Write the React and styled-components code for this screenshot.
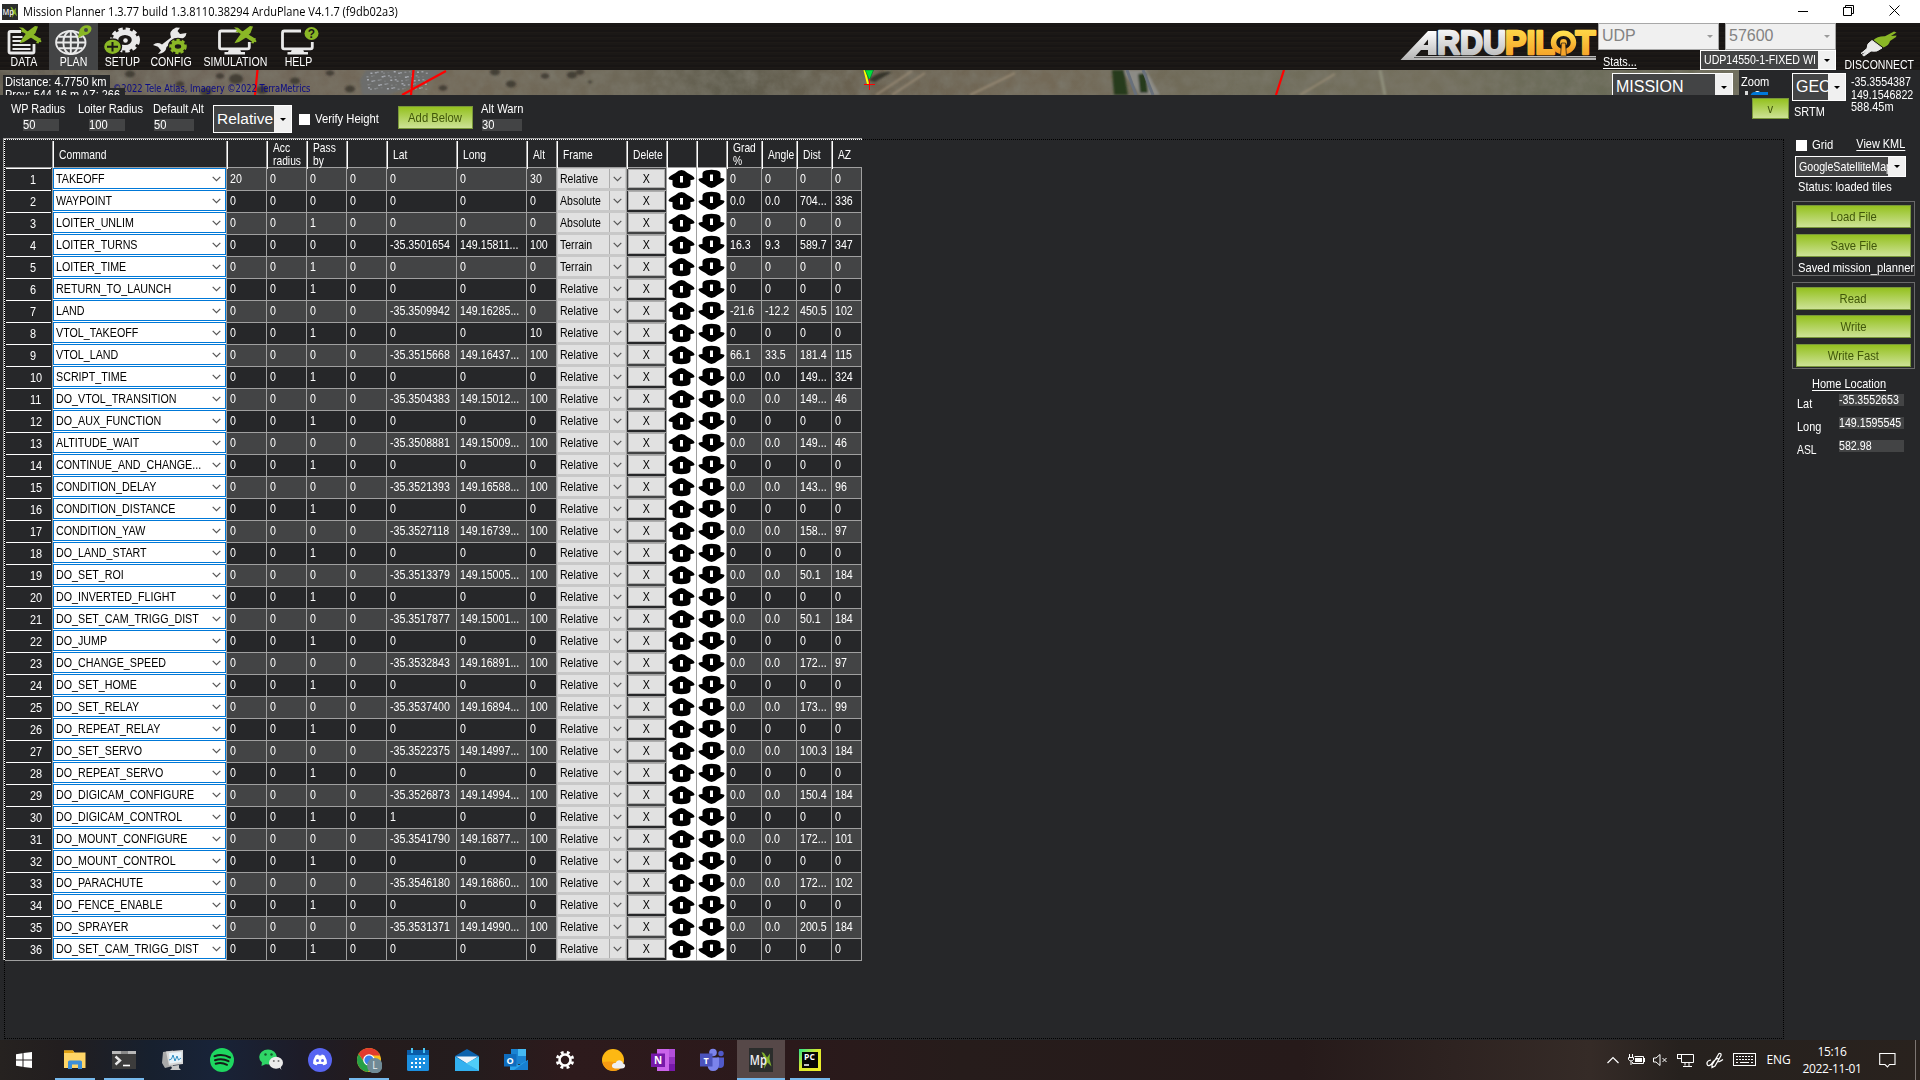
import React from "react";
import styled, { createGlobalStyle, css } from "styled-components";

const sans = '"Liberation Sans", Arial, sans-serif';
const segoe = '"Open Sans", "Noto Sans", sans-serif';

const Global = createGlobalStyle`
  * { box-sizing: border-box; }
  html, body { margin: 0; padding: 0; background: #262729; }
  body { width: 1920px; height: 1080px; overflow: hidden; font-family: ${sans}; font-size: 13px; color: #fff; }
  svg { display: block; flex: none; }
`;

/* condensed run of text */
const T = styled.span`
  display: inline-block; transform: scaleX(${(p) => p.$s || 0.84}); transform-origin: ${(p) => p.$o || "left"} center; white-space: inherit;
`;

const Desktop = styled.div`
  width: 1920px; height: 1080px; display: flex; flex-direction: column; overflow: hidden; white-space: nowrap;
`;

/* ---------- title bar ---------- */
const TitleBar = styled.div`
  height: 23px; background: #fff; color: #000; display: flex; align-items: center; padding-left: 2px; flex: none;
`;
const Title = styled.div`
  font: 12px/22px ${segoe}; margin-left: 5px; flex: 1;
`;
const WindowButtons = styled.div`
  display: flex; align-items: center; gap: 35px; padding: 0 20px 3px 0;
`;

/* ---------- menu strip ---------- */
const MenuStrip = styled.div`
  height: 47px; flex: none; display: flex; overflow: hidden;
  background: repeating-linear-gradient(0deg, #1b1816 0 2px, #1e1a17 2px 3px, #181514 3px 5px);
`;
const MenuItem = styled.div`
  width: ${(p) => p.$w}px; flex: none; display: flex; flex-direction: column; align-items: center; padding: 2px 1px 0 0;
  background: ${(p) => (p.$on ? "#434445" : "transparent")};
`;
const MenuLabel = styled.div`
  font-size: 13.4px; line-height: 14px; color: #fff; margin-top: -1px;
`;
const Spacer = styled.div`flex: 1;`;
const LogoBox = styled.div`padding-top: 5px; margin-right: 1px; flex: none;`;
const Connection = styled.div`width: 238px; display: flex; flex-direction: column; flex: none;`;
const ConnRow = styled.div`display: flex; justify-content: space-between;`;
const Link = styled(T)`text-decoration: underline; text-underline-offset: 2px;`;
const StatsLink = styled.div`padding: 4px 0 0 5px; font-size: 13.4px;`;
const Disconnect = styled.div`
  width: 84px; flex: none; display: flex; flex-direction: column; align-items: center; padding: 8px 0 0 2px;
`;

/* ---------- combo boxes ---------- */
const Combo = styled.div`
  display: flex; flex: none; width: ${(p) => p.$w}px; height: ${(p) => p.$h}px; overflow: hidden;
  border: 1px solid ${(p) => (p.$off ? "#a8a8a8" : "#fff")};
  background: ${(p) => (p.$off ? "#f0f0f0" : "#434445")};
  color: ${(p) => (p.$off ? "#838383" : "#fff")};
`;
const ComboText = styled.div`
  flex: 1; min-width: 0; overflow: hidden; padding-left: 3px; line-height: ${(p) => p.$lh}px;
  ${(p) => (p.$big ? css`font: ${p.$big}px/${p.$lh}px ${sans};` : "")}
`;
const ComboArrow = styled.div`
  width: 17px; flex: none; background: #f0f0f0; display: flex; align-items: center; justify-content: center;
  &::after { content: ""; border: 3px solid transparent; border-top-color: ${(p) => (p.$off ? "#9a9a9a" : "#000")}; border-bottom: 0; }
`;
const ComboBox = ({ w, h, off, big, lh, s, children }) => (
  <Combo $w={w} $h={h} $off={off}>
    <ComboText $big={big} $lh={lh}><T $s={s || 1}>{children}</T></ComboText>
    <ComboArrow $off={off} />
  </Combo>
);

/* ---------- work area ---------- */
const Work = styled.div`flex: 1; min-height: 0; display: flex; background: #262729;`;
const MainCol = styled.div`width: 1789px; display: flex; flex-direction: column; flex: none;`;
const MapRow = styled.div`height: 25px; display: flex; overflow: hidden; flex: none;`;
const MapView = styled.div`width: 1739px; height: 25px; position: relative; overflow: hidden; flex: none;`;
const MapOverlay = styled.div`position: absolute; left: 3px; top: 5px; display: flex; flex-direction: column; align-items: flex-start;`;
const MapTag = styled.div`
  background: #262729; width: ${(p) => p.$w}px; height: 13px; line-height: 14px; padding-left: 2px; font-size: 13.2px; overflow: hidden;
`;
const Copyright = styled.div`
  position: absolute; left: 113px; top: 12px; font: 9.6px/14px "DejaVu Sans", sans-serif; color: #0a0a84;
`;
const MissionPick = styled.div`position: absolute; left: 1612px; top: 3px;`;
const ZoomPanel = styled.div`width: 50px; padding: 5px 0 0 2px; line-height: 14px; font-size: 13.2px;`;

const ParamBar = styled.div`height: 44px; flex: none; display: flex; align-items: flex-start;`;
const Param = styled.div`
  display: flex; flex: none; flex-direction: column; width: ${(p) => p.$w}px; margin-left: ${(p) => p.$ml}px; padding-top: 7px; line-height: 14px; font-size: 13.3px;
`;
const ParamInput = styled.div`
  background: #434445; width: ${(p) => p.$w}px; height: 12px; line-height: 12px; margin: 3px 0 0 ${(p) => p.$ml || 0}px;
`;
const Check = styled.div`
  display: flex; align-items: center; gap: 5px; line-height: 14px; font-size: 13.4px;
  &::before { content: ""; width: 11px; height: 11px; background: #fff; }
`;
const VerifyCheck = styled(Check)`margin: 17px 0 0 7px; width: 99px; flex: none;`;
const GreenBox = styled.div`
  flex: none; width: ${(p) => p.$w}px; height: ${(p) => p.$h || 23}px; line-height: ${(p) => (p.$h || 23) - 1}px;
  border: 1px solid #79973a; background: linear-gradient(#94c11f, #cde296); color: #40570a; text-align: center;
  font-size: 13.4px; margin: ${(p) => p.$m || 0};
`;
const GreenButton = ({ w, h, m, children }) => <GreenBox $w={w} $h={h} $m={m}><T $s={0.84} $o="center">{children}</T></GreenBox>;
const SelectWrap = styled.div`margin: 10px 0 0 10px;`;

/* ---------- waypoint grid ---------- */
const GridFrame = styled.div`
  margin-left: 4px; width: 1780px; height: 900px; border: 1px dotted #000; flex: none;
`;
const GridOuter = styled.div`
  width: 859px; margin: -2px 0 0 -2px; border-left: 1px solid #a0a0a0; border-top: 1px solid #a0a0a0;
`;
const GridInner = styled.div`border-left: 1px dotted #fff; border-top: 1px dotted #fff;`;
const cols = "48px 174px 40px 40px 40px 40px 70px 70px 30px 70px 40px 30px 30px 35px 35px 35px 30px";
const HeadRow = styled.div`
  display: grid; grid-template-columns: ${cols}; height: 28px; border-bottom: 1px solid #a0a0a0;
`;
const HeadCell = styled.div`
  display: flex; align-items: center; line-height: 13px; white-space: pre; margin: 1px 0 1px 0;
  padding: 0 0 2px 5px; border-left: ${(p) => (p.$first ? "0" : "1px solid #fff")};
  border-right: ${(p) => (p.$last ? "0" : "1px solid #a0a0a0")};
`;
const Row = styled.div`
  display: grid; grid-template-columns: ${cols}; height: 22px; background: ${(p) => (p.$alt ? "#434445" : "#262729")};
`;
const box = css`border-right: 1px solid #a0a0a0; border-bottom: 1px solid #a0a0a0; min-width: 0;`;
const CellBox = styled.div`${box} padding-left: 3px; line-height: 22px;`;
const Cell = ({ children }) => <CellBox><T $s={0.82}>{children}</T></CellBox>;
const RowHead = styled.div`${box} background: #262729; padding: 0 1px;`;
const RowNum = styled.div`border-top: 1px solid #fff; height: 21px; line-height: 22px; padding-left: 24px;`;
const CommandCell = styled.div`${box} background: #fff; color: #000;`;
const CommandBox = styled.div`
  height: 21px; border: 1px solid #0078d7; display: flex; align-items: center; padding: 0 4px 0 2px; line-height: 19px; font-size: 13.2px;
`;
const CommandText = styled.div`flex: 1; min-width: 0;`;
const FrameCell = styled.div`${box} background: #c8c8c8; padding: 1px;`;
const FrameBox = styled.div`
  height: 19px; width: 67px; background: #e1e1e1; color: #000; display: flex; line-height: 20px; padding-left: 2px;
`;
const FrameText = styled.div`flex: 1; min-width: 0;`;
const FrameArrow = styled.div`
  width: 16px; flex: none; border-left: 1px solid #adadad; display: flex; align-items: center; justify-content: center;
`;
const DeleteCell = styled.div`${box} padding: 1px;`;
const DeleteButton = styled.div`
  height: 19px; border: 1px solid #adadad; background: #e1e1e1; color: #000; text-align: center; line-height: 18px; padding-right: 1px;
`;
const ArrowCell = styled.div`${box} background: #fff; display: flex; align-items: center; padding-left: 0;`;

/* ---------- side panel ---------- */
const Side = styled.div`width: 131px; flex: none; padding: 3px 0 0 3px; display: flex; flex-direction: column;`;
const SideTop = styled.div`display: flex; height: 63px;`;
const SrtmCol = styled.div`width: 59px; flex: none; display: flex; flex-direction: column;`;
const Srtm = styled.div`padding: 3px 0 0 2px;`;
const Coords = styled.div`line-height: 12.7px; padding-top: 3px; display: flex; flex-direction: column; width: 68px; flex: none;`;
const GridLine = styled.div`display: flex; justify-content: space-between; align-items: flex-start; padding: 0 15px 0 4px; height: 20px;`;
const GridCheck = styled(Check)`margin-top: 2px;`;
const MapTypeWrap = styled.div`padding-left: 3px;`;
const Status = styled.div`padding: 3px 0 0 6px; line-height: 14px; height: 24px;`;
const Group = styled.div`
  width: 123px; height: ${(p) => p.$h}px; margin-bottom: ${(p) => p.$mb || 0}px; border: 1px solid #6a6a6a; padding: ${(p) => p.$pt}px 3px 0;
  display: flex; flex-direction: column; gap: ${(p) => p.$gap}px; flex: none;
`;
const SavedText = styled.div`margin-left: 2px; line-height: 14px; width: 117px; margin-top: -2px;`;
const HomeTitle = styled.div`padding: 8px 0 0 20px; line-height: 14px; height: 24px;`;
const HomeRow = styled.div`display: flex; height: 23px; padding-left: 5px;`;
const HomeLabel = styled.div`width: 42px; line-height: 14px; padding-top: 4px;`;
const HomeInput = styled.div`width: 65px; height: 12px; background: #434445; line-height: 12px; margin-top: 1px;`;

/* ---------- taskbar ---------- */
const Taskbar = styled.div`
  height: 40px; flex: none; display: flex;
  background: linear-gradient(90deg, #262220 0, #221e1f 60px, #17202e 150px, #182338 215px, #1d1c28 300px, #241b1c 370px, #241c1d 470px, #2d1a1c 570px, #2b191b 790px, #261c1b 960px, #261a1a 1300px, #352b27 1590px, #26211e 1680px, #29221e 1920px);
`;
const Start = styled.div`width: 51px; flex: none; display: flex; align-items: center; padding-left: 16px;`;
const Apps = styled.div`display: flex; gap: 1px; flex: 1;`;
const AppSlot = styled.div`
  width: 48px; height: 40px; display: flex; align-items: center; justify-content: center;
  background: ${(p) => (p.$active ? "#564848" : "transparent")};
`;
const AppInner = styled.div`
  width: ${(p) => (p.$active ? 48 : 40)}px; height: 40px; display: flex; align-items: center; justify-content: center; padding-top: 2px;
  border-bottom: 2px solid ${(p) => (p.$open ? "#76b9ed" : "transparent")};
`;
const Tray = styled.div`display: flex; align-items: center; width: 312px; flex: none;`;
const TrayIcon = styled.div`width: ${(p) => p.$w}px; display: flex; justify-content: center; flex: none;`;
const Lang = styled.div`font: 12px/16px ${segoe}; width: 25px; text-align: center; letter-spacing: -0.2px; flex: none;`;
const Clock = styled.div`font: 12px/17.5px ${segoe}; width: 82px; text-align: center; letter-spacing: -0.35px; flex: none;`;
const ShowDesktop = styled.div`width: 1px; height: 40px; background: #7d7673; margin-left: 14px;`;

/* ---------- icons ---------- */
const Plane = ({ x, y }) => (
  <g transform={`translate(${x} ${y})`} fill="#8ab726">
    <path d="M0 1.200 L4 1.800 L8 5 L14 8.200 L19.500 11.500 L22.500 15 L22 16.200 L17.500 15.200 L11 11 L5 6.800 L1.500 5.500 L3 4Z" />
    <path d="M19 0.500 L16 0 L8.500 5.500 L2 14.500 L0.500 17.200 L5 16 L12 11.500 L16.500 7Z" />
    <path d="M17 17 L20 12 L22 12.500 L19.500 17.500Z" />
  </g>
);
const DataIcon = () => (
  <svg width="44" height="31" viewBox="0 0 44 31">
    <path d="M19 6.500 H8.500 Q7 6.500 7 8 V26.500 Q7 28 8.500 28 H30.500 Q32 28 32 26.500 V19" fill="none" stroke="#e9e9e9" strokeWidth="2.800" />
    <path d="M10.500 12h10M10.500 16h9M10.500 20h18M10.500 24h18" stroke="#e9e9e9" strokeWidth="2" />
    <Plane x={17} y={1} />
  </svg>
);
const PlanIcon = () => (
  <svg width="44" height="31" viewBox="0 0 44 31">
    <g fill="none" stroke="#e9e9e9" strokeWidth="1.900">
      <ellipse cx="19.800" cy="17.500" rx="14.700" ry="11.500" />
      <ellipse cx="19.800" cy="17.500" rx="7.500" ry="11.500" />
      <path d="M19.800 6v23M5 17.500h29.500M8 11.800h23.500M8 23.200h23.500" />
    </g>
    <path d="M27 13 L28.500 5 Q31 0 36.500 0.300 Q42 1 40 6 Q37.500 10 32 10.500 Z" fill="#8ab726" />
    <circle cx="35" cy="5" r="2" fill="#434445" />
  </svg>
);
const SetupIcon = () => (
  <svg width="44" height="31" viewBox="0 0 44 31">
    <ellipse cx="25" cy="15" rx="13" ry="10.600" fill="none" stroke="#e9e9e9" strokeWidth="4" strokeDasharray="4.200 2.800" />
    <ellipse cx="25" cy="15" rx="9.500" ry="7.800" fill="none" stroke="#e9e9e9" strokeWidth="5.500" />
    <circle cx="25.500" cy="15.500" r="2.300" fill="#e9e9e9" />
    <ellipse cx="12.500" cy="21.800" rx="9" ry="7.800" fill="#8ab726" stroke="#1b1816" strokeWidth="1.400" />
    <path d="M12.500 17v9.500M7 21.800h11" stroke="#1b1816" strokeWidth="2" />
  </svg>
);
const ConfigIcon = () => (
  <svg width="44" height="31" viewBox="0 0 44 31">
    <path d="M4 20 Q8 16.500 13 19.500 L22 12.500 Q19 6 27 2.500 L31 2.800 L28.500 6 L31 9 L37.500 8 Q37 14 28 14.500 L17.500 22 Q17 28 9 29 L12 25.500 L9 21.800 Z" fill="#e9e9e9" />
    <ellipse cx="29" cy="21.500" rx="7.700" ry="6.200" fill="none" stroke="#1b1816" strokeWidth="5" />
    <ellipse cx="29" cy="21.500" rx="7.300" ry="6.200" fill="none" stroke="#8ab726" strokeWidth="3" strokeDasharray="3 2" />
    <ellipse cx="29" cy="21.500" rx="5.200" ry="4.200" fill="none" stroke="#8ab726" strokeWidth="4" />
  </svg>
);
const Monitor = () => (
  <g>
    <path d="M24 6 H7.200 Q5.500 6 5.500 8 V22 Q5.500 23.800 7.200 23.800 H33.500 Q35.300 23.800 35.300 22 V17" fill="none" stroke="#e9e9e9" strokeWidth="2.800" />
    <path d="M15 24h11l1 3h4v2.500H10.500V27H14z" fill="#e9e9e9" />
  </g>
);
const SimIcon = () => (
  <svg width="44" height="31" viewBox="0 0 44 31"><Monitor /><Plane x={20} y={1} /></svg>
);
const HelpIcon = () => (
  <svg width="44" height="31" viewBox="0 0 44 31">
    <Monitor />
    <circle cx="34.500" cy="8.500" r="8" fill="#1b1816" />
    <ellipse cx="34.500" cy="8.500" rx="7" ry="6.500" fill="#8ab726" />
    <text x="34.500" y="12.800" fontSize="12" fontWeight="700" textAnchor="middle" fill="#1b1816" fontFamily="Liberation Sans">?</text>
  </svg>
);
const PlugIcon = () => (
  <svg width="40" height="28" viewBox="0 0 40 28">
    <path d="M2 22.500 L8 17.500 Q7.500 12.500 13 9.500 L23 17 Q18 21.500 12 20 L5 25 L3.500 24 L7 20.500 Z" fill="#e9e9e9" stroke="#e9e9e9" />
    <path d="M14.500 9 Q18 5 26 5.200 L35 0.500 L37.500 1.500 L32 5 L37.500 4.500 L37 6 L31 10 Q30 14.500 24.500 16.500 Z" fill="#8ab726" />
  </svg>
);
const ArduLogo = () => (
  <svg width="197" height="36" viewBox="0 0 197 36">
    <defs>
      <linearGradient id="lg-s" x1="0" x2="0" y1="0" y2="1"><stop offset="0" stopColor="#fff" /><stop offset="1" stopColor="#b4b4b4" /></linearGradient>
      <linearGradient id="lg-y" x1="0" x2="0" y1="0" y2="1"><stop offset="0" stopColor="#ffe04d" /><stop offset="1" stopColor="#f59a23" /></linearGradient>
    </defs>
    <path d="M0.500 32 L28 3 H36.500 V27 H28 V22 H21 L15.500 28 H196 V32 Z M23.500 17 H28 V11.500 Z" fill="url(#lg-s)" fillRule="evenodd" />
    <path d="M14 29.500H196" stroke="#5f5f5f" strokeWidth="1" />
    <g fontFamily="Liberation Sans" fontWeight="700" fontSize="32.500" strokeWidth="2.400" strokeLinejoin="round">
      <text x="37" y="26" textLength="69" lengthAdjust="spacingAndGlyphs" fill="url(#lg-s)" stroke="url(#lg-s)">RDU</text>
      <text x="105" y="26" textLength="50" lengthAdjust="spacingAndGlyphs" fill="url(#lg-y)" stroke="url(#lg-y)">PIL</text>
      <text x="175.500" y="26" textLength="20" lengthAdjust="spacingAndGlyphs" fill="url(#lg-y)" stroke="url(#lg-y)">T</text>
    </g>
    <ellipse cx="163.500" cy="14.500" rx="10" ry="9.300" fill="none" stroke="url(#lg-y)" strokeWidth="5.500" />
    <circle cx="163.500" cy="14.500" r="3.400" fill="#fbb733" />
    <path d="M161.500 15h4l1 13h-6z" fill="#f6a52a" stroke="#1b1816" strokeWidth="0.700" />
  </svg>
);
const ChevronDown = () => (
  <svg width="9" height="6" viewBox="0 0 9 6"><path d="M0.700 0.800 L4.500 4.600 L8.300 0.800" fill="none" stroke="#555" strokeWidth="1.200" /></svg>
);
const Arrow = ({ down }) => (
  <svg width="29" height="20" viewBox="0 0 29 20">
    <g transform={down ? "translate(0.500 20) scale(1 -1)" : "translate(0.500 0)"}>
      <path d="M14 1 Q17 1 20 4 Q26 7 27 9.300 Q27 11.200 23 11 V16 Q22.500 18 19 18.800 Q14 19.500 9 18.800 Q5.500 18 5 16 V11 Q1 11.200 1 9.300 Q2 7 8 4 Q11 1 14 1Z" fill="#000" />
      <rect x="12.500" y={down ? 8 : 7} width="3" height="6.500" fill="#fff" />
    </g>
  </svg>
);

const trees = [
  [236, 9, 7], [262, 20, 6], [295, 11, 5], [330, 3, 4], [350, 19, 5], [130, 4, 5], [180, 14, 4], [495, 2, 5], [511, 14, 5], [545, 6, 4], [572, 5, 5], [580, 2, 4], [590, 12, 2], [443, 18, 4], [206, 22, 6], [220, 6, 4],
];
/* parked cars: a loose lattice, shifted a little from lot to lot */
const cars = Array.from({ length: 90 }, (_, i) => ({
  x: 366 + (i % 18) * 3.4 + ((i * 7) % 5) * 0.5,
  y: 1 + Math.floor(i / 18) * 4 + ((i * 11) % 4) * 0.5,
  o: ((i * 13) % 7) / 9,
}));
const MapImage = () => (
  <svg width="1739" height="25" viewBox="0 0 1739 25">
    <defs>
      <linearGradient id="ground">
        <stop offset="0" stopColor="#5f594d" /><stop offset="0.12" stopColor="#70665a" /><stop offset="0.25" stopColor="#736958" />
        <stop offset="0.36" stopColor="#6e6858" /><stop offset="0.42" stopColor="#605d4e" /><stop offset="0.5" stopColor="#6b6251" />
        <stop offset="0.6" stopColor="#736957" /><stop offset="0.72" stopColor="#6f6c5a" /><stop offset="0.82" stopColor="#746f5d" /><stop offset="0.9" stopColor="#696a57" /><stop offset="1" stopColor="#6e6d5a" />
      </linearGradient>
      <filter id="grain" x="0" y="0" width="100%" height="100%">
        <feTurbulence type="fractalNoise" baseFrequency="0.07" numOctaves="5" seed="7" />
        <feColorMatrix values="0 0 0 0 0.2  0 0 0 0 0.19  0 0 0 0 0.15  0.9 0.9 0 0 -0.62" />
      </filter>
      <filter id="soft"><feGaussianBlur stdDeviation="1.1" /></filter>
    </defs>
    <rect width="1739" height="25" fill="url(#ground)" />
    <rect width="1739" height="25" filter="url(#grain)" />
    <g filter="url(#soft)">
      {trees.map(([x, y, r]) => <ellipse key={x} cx={x} cy={y} rx={r} ry={r * 0.7} fill="#37322a" opacity="0.8" />)}
      <path d="M868 10 Q880 0 892 2 L875 12Z" fill="#35342b" />
      <path d="M876 25 L912 1 M892 25 L925 3 M970 25 L1015 3 M1640 22 L1700 12" stroke="#958873" strokeWidth="2" fill="none" />
      <path d="M360 10 L366 0 L440 0 L430 10 L388 25 L362 25Z" fill="#6c6d6c" />
      <path d="M1122 0 L1140 25 L1160 25 L1146 0Z" fill="#8c8b85" />
      <path d="M1112 0 L1124 0 L1128 25 L1114 25Z M1138 4 L1146 3 L1148 23 L1140 23Z" fill="#263a1d" />
      <path d="M1300 25 L1335 4" stroke="#958b74" strokeWidth="2" />
      <path d="M1380 0 L1385 25" stroke="#8f8f7c" strokeWidth="3" />
    </g>
    <g fill="#c3c8d2">
      {cars.map((c, i) => <rect key={i} x={c.x} y={c.y} width="2" height="1.500" opacity={c.o} />)}
    </g>
    <path d="M1127 0 L1136 25 M1143 0 L1153 25" stroke="#68707b" strokeWidth="3" />
    <path d="M257.500 0 L255 25 M413.500 0 L411 25 M402 25 L446 1 M1284 0 L1276 25" stroke="#f00" strokeWidth="2.200" />
    <path d="M864.500 0 L868 14" stroke="#ff0" strokeWidth="2" />
    <path d="M865 0H873.500L869.500 10Z" fill="#00e03a" stroke="#063" strokeWidth="0.600" />
    <path d="M864 14.500h11M869.500 9v11" stroke="#f00" strokeWidth="1" />
  </svg>
);

const MpIcon = ({ s }) => (
  <svg width={s} height={s} viewBox="0 0 24 24">
    <rect width="24" height="24" fill="#2b2d2c" />
    <path d="M12.500 4 L15 5 L18 9.500 L21 5.500 L20.500 11 L22.500 18.500 L18.500 14.500 L15 21 L16 12Z" fill="#7fb02c" />
    <text x="0.800" y="16.500" fontFamily="Open Sans" fontWeight="600" fontSize="14.500" fill="#f0f0f0" textLength="17" lengthAdjust="spacingAndGlyphs">Mp</text>
  </svg>
);
const Letter = ({ x, y, size = 9, children, fill = "#fff" }) => (
  <text x={x} y={y} fontSize={size} fontWeight="700" fontFamily="Open Sans" textAnchor="middle" fill={fill}>{children}</text>
);
const I = ({ children }) => <svg width="26" height="26" viewBox="-1 -1 26 26">{children}</svg>;

const taskApps = [
  { open: true, icon: <I><path d="M1 4V2.500H10L11.500 4.500H22.500V20H1Z" fill="#ffd667" /><path d="M1 2.500H10L11 5H1Z" fill="#e0a010" /><path d="M5 21V14Q5 12.500 6.500 12.500H17.500Q19 12.500 19 14V21H15V16.500H9V21Z" fill="#3d8fd8" /></I> },
  { open: true, icon: <I><rect y="3" width="24" height="18" fill="#3c3c3c" /><rect y="3" width="24" height="3" fill="#b8b8b8" /><path d="M9 3h7v3H9z" fill="#888" /><path d="M3.500 8.500L8 12.500L3.500 16.500" stroke="#e8e8e8" strokeWidth="2.400" fill="none" /><path d="M11 17.500h7" stroke="#fff" strokeWidth="1.600" /></I> },
  { icon: <I><path d="M2 4L12 2.500V18L4 20L1 15Z" fill="#a9a9a9" /><path d="M5 3.500L22 2V16L8 17.500Z" fill="#d8d8d8" /><path d="M8 5L20.500 4V14L8.500 15.500Z" fill="#e9f4fb" /><path d="M8 12L10.500 11L12 7L14 13L16 8L17.500 12L20 10" stroke="#2f8fc4" fill="none" /><path d="M10 18L18 17V20L20 22H9L11 20Z" fill="#c7c7c7" /></I> },
  { icon: <I><circle cx="12" cy="12" r="12" fill="#1ed760" /><path d="M4.500 8.200Q12.500 5.500 20 9.500M5 12.200Q12 9.800 18.500 13.200M5.700 15.800Q11.500 14 17 16.800" stroke="#151c18" fill="none" strokeWidth="2" strokeLinecap="round" /></I> },
  { icon: <I><ellipse cx="9" cy="9" rx="8.800" ry="7.500" fill="#2fd566" /><path d="M3 14L2.500 18L7 16Z" fill="#2fd566" /><circle cx="6.500" cy="6.500" r="1.200" fill="#14592c" /><circle cx="12.500" cy="6.500" r="1.200" fill="#14592c" /><ellipse cx="17" cy="14.800" rx="7" ry="6" fill="#ececec" /><path d="M20 19L22.500 22L21 17Z" fill="#ececec" /><circle cx="14.800" cy="13" r="1" fill="#777" /><circle cx="19.500" cy="13" r="1" fill="#777" /></I> },
  { icon: <I><circle cx="12" cy="12" r="12" fill="#5865f2" /><path d="M7.500 7.500Q9 6.500 10.300 6.500L10.800 7.500H13.200L13.700 6.500Q15 6.500 16.500 7.500Q19 11.500 19 15.500Q17.500 17 15.300 17.300L14.500 16H9.500L8.700 17.300Q6.500 17 5 15.500Q5 11.500 7.500 7.500Z" fill="#fff" /><circle cx="9.500" cy="12.500" r="1.500" fill="#5865f2" /><circle cx="14.500" cy="12.500" r="1.500" fill="#5865f2" /></I> },
  { open: true, icon: <I><circle cx="12" cy="12" r="12" fill="#f9bf1c" /><path d="M1.600 6A12 12 0 0 1 22.400 6L23.200 7.500H12A5 5 0 0 0 7.500 14Z" fill="#e23b2e" /><path d="M1.600 6A12 12 0 0 0 11 24L15.500 16L7.500 14.500Z" fill="#27a045" /><circle cx="12" cy="12" r="5.800" fill="#fff" /><circle cx="12" cy="12" r="4.600" fill="#3b80ea" /><circle cx="17.800" cy="17.800" r="7.700" fill="#6f8a96" /><text x="17.800" y="21.300" fontSize="10" fontFamily="Open Sans" textAnchor="middle" fill="#e8eef0">L</text></I> },
  { icon: <I><rect x="1" y="2" width="22" height="21" rx="1.500" fill="#1b8fe0" /><rect x="1" y="2" width="22" height="5" fill="#0a5ca8" /><path d="M6 0v5M18 0v5" stroke="#49c5f5" strokeWidth="2" /><path d="M9 11h11M5 15h15M5 19h11" stroke="#fff" strokeWidth="2" strokeDasharray="2 2" /></I> },
  { icon: <I><path d="M0 8L12 1L24 8V23H0Z" fill="#0c62ad" /><path d="M1 8.500H23L12 15.500Z" fill="#eef4fa" /><path d="M0 8.500L24 23H0Z" fill="#32b1f0" /><path d="M24 8.500L11 15.500L24 23Z" fill="#4fcdf9" /></I> },
  { icon: <I><rect x="7" y="1" width="15" height="15" fill="#1a83d2" /><rect x="14" y="1" width="8" height="7" fill="#45b9f3" /><path d="M6 12L15 17L24 12V22H6Z" fill="#2aa3ea" /><path d="M24 12V22H10Z" fill="#177fd0" /><rect y="6" width="12.500" height="12.500" fill="#0f6cbd" /><Letter x={6.200} y={15.700}>O</Letter></I> },
  { icon: <I><circle cx="12" cy="12" r="5.500" fill="none" stroke="#fff" strokeWidth="2.600" /><circle cx="12" cy="12" r="7.800" fill="none" stroke="#fff" strokeWidth="2.800" strokeDasharray="2.900 3.226" strokeDashoffset="-1.600" /></I> },
  { icon: <I><circle cx="11" cy="12" r="11" fill="#fdb813" /><path d="M0.500 14A11 11 0 0 0 21 17Q12 12 0.500 14Z" fill="#f59a12" /><path d="M13 20.500Q9.500 20 10 17Q11 14.500 13.500 15Q15 11.500 18.500 12.500Q21 13.500 21 15.500Q23.500 16 23 18.500Q22.500 20.500 20 20.500Z" fill="#eef0f4" /></I> },
  { icon: <I><rect x="6" y="1" width="18" height="22" fill="#ca64ea" /><rect x="18" y="1" width="6" height="8" fill="#b34fdb" /><rect x="18" y="9" width="6" height="7" fill="#9332bf" /><rect x="18" y="16" width="6" height="7" fill="#7719aa" /><rect y="5.500" width="14" height="13.500" fill="#7719aa" /><Letter x={7} y={16} size={10}>N</Letter></I> },
  { icon: <I><circle cx="13" cy="4.500" r="3.800" fill="#7b83eb" /><circle cx="21" cy="5.500" r="2.700" fill="#5059c9" /><path d="M17 9.500H24V16Q24 20 20 20Q17 20 17 17Z" fill="#5059c9" /><path d="M8 9.500H19V17Q18.500 23 13 23Q8 23 7.500 17Z" fill="#7b83eb" /><rect y="5.500" width="12.500" height="13" fill="#4b53bc" /><Letter x={6.200} y={15.600}>T</Letter></I> },
  { open: true, active: true, icon: <MpIcon s={24} /> },
  { open: true, icon: <I><defs><linearGradient id="pc" x1="0" y1="0" x2="1" y2="1"><stop offset="0" stopColor="#27e38e" /><stop offset="0.45" stopColor="#d9e82e" /><stop offset="1" stopColor="#f1f029" /></linearGradient></defs><rect x="1" y="1" width="22" height="22" fill="url(#pc)" /><rect x="4" y="4" width="16" height="16" fill="#050505" /><Letter x={11.500} y={11.500} size={8.500}>PC</Letter><path d="M6 17h5" stroke="#fff" strokeWidth="1.500" /></I> },
];

/* ---------- data ---------- */
const P = "0 0 0 0".split(" ");
const Q = "0 0 1 0".split(" ");
const z = (cmd, extra = {}) => ({ cmd, p: Q, lat: "0", lng: "0", alt: "0", frame: "Relative", g: "0", a: "0", d: "0", az: "0", ...extra });
const w = (cmd, lat, lng, d, az, extra = {}) => ({ cmd, p: P, lat, lng, alt: "100", frame: "Relative", g: "0.0", a: "0.0", d, az, ...extra });
const rows = [
  z("TAKEOFF", { p: ["20", "0", "0", "0"], alt: "30" }),
  w("WAYPOINT", "0", "0", "704...", "336", { alt: "0", frame: "Absolute" }),
  z("LOITER_UNLIM", { frame: "Absolute" }),
  w("LOITER_TURNS", "-35.3501654", "149.15811...", "589.7", "347", { frame: "Terrain", g: "16.3", a: "9.3" }),
  z("LOITER_TIME", { frame: "Terrain" }),
  z("RETURN_TO_LAUNCH"),
  w("LAND", "-35.3509942", "149.16285...", "450.5", "102", { alt: "0", g: "-21.6", a: "-12.2" }),
  z("VTOL_TAKEOFF", { alt: "10" }),
  w("VTOL_LAND", "-35.3515668", "149.16437...", "181.4", "115", { g: "66.1", a: "33.5" }),
  z("SCRIPT_TIME", { g: "0.0", a: "0.0", d: "149...", az: "324" }),
  w("DO_VTOL_TRANSITION", "-35.3504383", "149.15012...", "149...", "46"),
  z("DO_AUX_FUNCTION"),
  w("ALTITUDE_WAIT", "-35.3508881", "149.15009...", "149...", "46"),
  z("CONTINUE_AND_CHANGE..."),
  w("CONDITION_DELAY", "-35.3521393", "149.16588...", "143...", "96"),
  z("CONDITION_DISTANCE"),
  w("CONDITION_YAW", "-35.3527118", "149.16739...", "158...", "97"),
  z("DO_LAND_START"),
  w("DO_SET_ROI", "-35.3513379", "149.15005...", "50.1", "184"),
  z("DO_INVERTED_FLIGHT"),
  w("DO_SET_CAM_TRIGG_DIST", "-35.3517877", "149.15001...", "50.1", "184"),
  z("DO_JUMP"),
  w("DO_CHANGE_SPEED", "-35.3532843", "149.16891...", "172...", "97"),
  z("DO_SET_HOME"),
  w("DO_SET_RELAY", "-35.3537400", "149.16894...", "173...", "99"),
  z("DO_REPEAT_RELAY"),
  w("DO_SET_SERVO", "-35.3522375", "149.14997...", "100.3", "184"),
  z("DO_REPEAT_SERVO"),
  w("DO_DIGICAM_CONFIGURE", "-35.3526873", "149.14994...", "150.4", "184"),
  z("DO_DIGICAM_CONTROL", { lat: "1" }),
  w("DO_MOUNT_CONFIGURE", "-35.3541790", "149.16877...", "172...", "101"),
  z("DO_MOUNT_CONTROL"),
  w("DO_PARACHUTE", "-35.3546180", "149.16860...", "172...", "102"),
  z("DO_FENCE_ENABLE"),
  w("DO_SPRAYER", "-35.3531371", "149.14990...", "200.5", "184"),
  z("DO_SET_CAM_TRIGG_DIST"),
];
const heads = ["", "Command", "", "Acc\nradius", "Pass\nby", "", "Lat", "Long", "Alt", "Frame", "Delete", "", "", "Grad\n%", "Angle", "Dist", "AZ"];

const WaypointRow = ({ r, n }) => (
  <Row $alt={n % 2 === 1}>
    <RowHead><RowNum><T $s={0.84}>{n}</T></RowNum></RowHead>
    <CommandCell><CommandBox><CommandText><T $s={0.812}>{r.cmd}</T></CommandText><ChevronDown /></CommandBox></CommandCell>
    {r.p.map((v, i) => <Cell key={i}>{v}</Cell>)}
    <Cell>{r.lat}</Cell>
    <Cell>{r.lng}</Cell>
    <Cell>{r.alt}</Cell>
    <FrameCell><FrameBox><FrameText><T $s={0.81}>{r.frame}</T></FrameText><FrameArrow><ChevronDown /></FrameArrow></FrameBox></FrameCell>
    <DeleteCell><DeleteButton><T $s={0.82} $o="center">X</T></DeleteButton></DeleteCell>
    <ArrowCell><Arrow /></ArrowCell>
    <ArrowCell><Arrow down /></ArrowCell>
    <Cell>{r.g}</Cell>
    <Cell>{r.a}</Cell>
    <Cell>{r.d}</Cell>
    <Cell>{r.az}</Cell>
  </Row>
);

const menu = [
  ["DATA", 49, DataIcon], ["PLAN", 49, PlanIcon], ["SETUP", 49, SetupIcon], ["CONFIG", 49, ConfigIcon], ["SIMULATION", 80, SimIcon], ["HELP", 46, HelpIcon],
];

export default function App() {
  return (
    <Desktop>
      <Global />
      <TitleBar>
        <MpIcon s={16} />
        <Title><T $s={0.921}>Mission Planner 1.3.77 build 1.3.8110.38294 ArduPlane V4.1.7 (f9db02a3)</T></Title>
        <WindowButtons>
          <svg width="10" height="11"><path d="M0 6.500h10" stroke="#000" strokeWidth="1" /></svg>
          <svg width="11" height="11" fill="none" stroke="#000"><path d="M0.500 2.500h8v8h-8zM2.500 2.500v-2h8v8h-2" /></svg>
          <svg width="11" height="11" fill="none" stroke="#000"><path d="M0.500 0.500l10 10M10.500 0.500l-10 10" /></svg>
        </WindowButtons>
      </TitleBar>

      <MenuStrip>
        {menu.map(([label, width, Icon]) => (
          <MenuItem key={label} $w={width} $on={label === "PLAN"}><Icon /><MenuLabel><T $s={0.79} $o="center">{label}</T></MenuLabel></MenuItem>
        ))}
        <Spacer />
        <LogoBox><ArduLogo /></LogoBox>
        <Connection>
          <ConnRow>
            <ComboBox w={121} h={27} off big={16} lh={24}>UDP</ComboBox>
            <ComboBox w={111} h={27} off big={16} lh={24}>57600</ComboBox>
          </ConnRow>
          <ConnRow>
            <StatsLink><Link $s={0.81}>Stats...</Link></StatsLink>
            <ComboBox w={136} h={20} lh={18} s={0.815}>UDP14550-1-FIXED WI</ComboBox>
          </ConnRow>
        </Connection>
        <Disconnect><PlugIcon /><MenuLabel><T $s={0.785} $o="center">DISCONNECT</T></MenuLabel></Disconnect>
      </MenuStrip>

      <Work>
        <MainCol>
          <MapRow>
            <MapView>
              <MapImage />
              <Copyright><T $s={0.87}>©2022 Tele Atlas, Imagery ©2022 TerraMetrics</T></Copyright>
              <MapOverlay>
                <MapTag $w={107}><T $s={0.845}>Distance: 4.7750 km</T></MapTag>
                <MapTag $w={122}><T $s={0.83}>Prev: 544.16 m AZ: 266</T></MapTag>
              </MapOverlay>
              <MissionPick><ComboBox w={121} h={28} big={16} lh={25}>MISSION</ComboBox></MissionPick>
            </MapView>
            <ZoomPanel>
              <T $s={0.84}>Zoom</T>
              <svg width="30" height="8"><path d="M4 2h3v6h-3z" fill="#d8d8d8" /><path d="M9 8Q10 3 13 3H27V8Z" fill="#0078d7" /><path d="M14 3q2-2 5 0z" fill="#fff" /></svg>
            </ZoomPanel>
          </MapRow>

          <ParamBar>
            <Param $w={56} $ml={11}><T $s={0.817}>WP Radius</T><ParamInput $w={36} $ml={12}><T>50</T></ParamInput></Param>
            <Param $w={66} $ml={11}><T $s={0.83}>Loiter Radius</T><ParamInput $w={36} $ml={11}><T>100</T></ParamInput></Param>
            <Param $w={50} $ml={9}><T $s={0.84}>Default Alt</T><ParamInput $w={40} $ml={1}><T>50</T></ParamInput></Param>
            <SelectWrap><ComboBox w={79} h={28} big={15.5} lh={25}>Relative</ComboBox></SelectWrap>
            <VerifyCheck><T $s={0.84}>Verify Height</T></VerifyCheck>
            <GreenButton w={75} m="11px 0 0 0">Add Below</GreenButton>
            <Param $w={50} $ml={8}><T $s={0.84}>Alt Warn</T><ParamInput $w={40} $ml={1}><T>30</T></ParamInput></Param>
            <Spacer />
            <GreenButton w={37} h={21} m="3px 0 0 0">v</GreenButton>
          </ParamBar>

          <GridFrame>
            <GridOuter>
              <GridInner>
                <HeadRow>
                  {heads.map((h, i) => <HeadCell key={i} $first={i === 0} $last={i === heads.length - 1}>{h && <T $s={0.79}>{h}</T>}</HeadCell>)}
                </HeadRow>
                {rows.map((r, i) => <WaypointRow key={i} r={r} n={i + 1} />)}
              </GridInner>
            </GridOuter>
          </GridFrame>
        </MainCol>

        <Side>
          <SideTop>
            <SrtmCol>
              <ComboBox w={54} h={28} big={16} lh={25}>GEO</ComboBox>
              <Srtm><T $s={0.84}>SRTM</T></Srtm>
            </SrtmCol>
            <Coords>
              <T $s={0.82}>-35.3554387</T>
              <T $s={0.82}>149.1546822</T>
              <T $s={0.84}>588.45m</T>
            </Coords>
          </SideTop>
          <GridLine><GridCheck><T>Grid</T></GridCheck><Link $s={0.84} $o="right">View KML</Link></GridLine>
          <MapTypeWrap><ComboBox w={111} h={21} lh={20} s={0.82}>GoogleSatelliteMap</ComboBox></MapTypeWrap>
          <Status><T $s={0.853}>Status: loaded tiles</T></Status>
          <Group $h={75} $gap={6} $mb={6} $pt={3}>
            <GreenButton w={115}>Load File</GreenButton>
            <GreenButton w={115}>Save File</GreenButton>
            <SavedText><T $s={0.86}>Saved mission_planner</T></SavedText>
          </Group>
          <Group $h={87} $gap={5.4} $pt={4}>
            <GreenButton w={115}>Read</GreenButton>
            <GreenButton w={115}>Write</GreenButton>
            <GreenButton w={115}>Write Fast</GreenButton>
          </Group>
          <HomeTitle><Link $s={0.847}>Home Location</Link></HomeTitle>
          <HomeRow><HomeLabel><T>Lat</T></HomeLabel><HomeInput><T $s={0.82}>-35.3552653</T></HomeInput></HomeRow>
          <HomeRow><HomeLabel><T>Long</T></HomeLabel><HomeInput><T $s={0.82}>149.1595545</T></HomeInput></HomeRow>
          <HomeRow><HomeLabel><T $s={0.8}>ASL</T></HomeLabel><HomeInput><T $s={0.82}>582.98</T></HomeInput></HomeRow>
        </Side>
      </Work>

      <Taskbar>
        <Start><svg width="16" height="16" viewBox="0 0 16 16" fill="#fff"><path d="M0 2.200L6.500 1.300V7.500H0ZM7.500 1.100L16 0V7.500H7.500ZM0 8.500H6.500V14.700L0 13.800ZM7.500 8.500H16V16L7.500 14.900Z" /></svg></Start>
        <Apps>
          {taskApps.map((a, i) => <AppSlot key={i} $active={a.active}><AppInner $open={a.open} $active={a.active}>{a.icon}</AppInner></AppSlot>)}
        </Apps>
        <Tray>
          <TrayIcon $w={10}><svg width="12" height="8" fill="none" stroke="#fff" strokeWidth="1.200"><path d="M0.500 7L6 1.500L11.500 7" /></svg></TrayIcon>
          <TrayIcon $w={38}><svg width="18" height="14" fill="none" stroke="#fff"><path d="M6.500 3.500H15.500V10.500H4.500V9" /><path d="M16.500 5v4" /><rect x="7" y="5" width="7" height="4" fill="#fff" stroke="none" /><path d="M1.500 1v3M4.500 1v3M0.500 4.500h5v2q-1 1.500-2.500 1.500q-1.500 0-2.500-1.500zM3 8v4" /></svg></TrayIcon>
          <TrayIcon $w={8}><svg width="15" height="14" fill="none" stroke="#fff"><path d="M0.500 5h2.500l4-3.500v11l-4-3.500h-2.500zM9.500 5l4 4M13.500 5l-4 4" /></svg></TrayIcon>
          <TrayIcon $w={42}><svg width="17" height="15" fill="none" stroke="#fff"><path d="M5 1.500H16.500V9.500H4.500V6M8 12.500v-3M6 13.500h9M12 9.500v3.500" /><rect x="0.500" y="1.500" width="4" height="4" /></svg></TrayIcon>
          <TrayIcon $w={17}><svg width="18" height="17" fill="none" stroke="#fff" strokeWidth="1.200"><path d="M6 13L13 1.500Q15.500 1 15 3.500L9 14L6 15.500ZM5 8Q0.500 9 1 12Q2 15 5 12.500Q7 9 11 6.500Q13 6 12 9Q12 11 17 7.500" /></svg></TrayIcon>
          <TrayIcon $w={43}><svg width="23" height="14" fill="none" stroke="#fff"><rect x="0.500" y="0.500" width="22" height="12" /><path d="M3 3.500h17M3 6.500h17" strokeDasharray="2 1" /><path d="M3 9.500h2M7 9.500h9M18 9.500h2" /></svg></TrayIcon>
          <Lang>ENG</Lang>
          <Clock>15:16<br />2022-11-01</Clock>
          <TrayIcon $w={28}><svg width="17" height="17" fill="none" stroke="#fff" strokeWidth="1.100"><path d="M0.700 1.500H16V12.500H10.500L8.500 15L6 12.500H0.700Z" /></svg></TrayIcon>
          <ShowDesktop />
        </Tray>
      </Taskbar>
    </Desktop>
  );
}
